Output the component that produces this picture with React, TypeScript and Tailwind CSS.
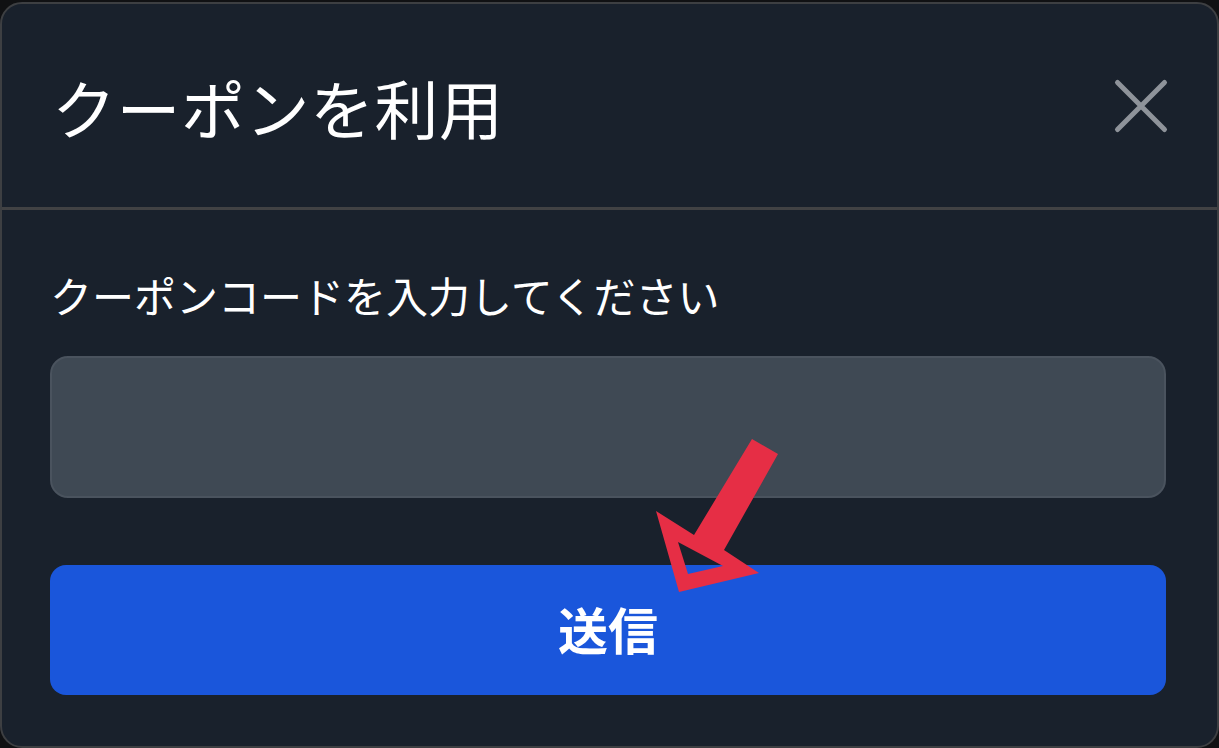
const font = { fontFamily: '"Noto Sans CJK JP", "Noto Sans", sans-serif' };

function CloseIcon() {
  return (
    <svg width="60" height="60" viewBox="0 0 60 60" fill="none" stroke="currentColor" strokeWidth="5" strokeLinecap="round">
      <path d="M6.5 6.5 L53.5 53.5 M53.5 6.5 L6.5 53.5" />
    </svg>
  );
}

function CouponArrow() {
  // red annotation arrow pointing down-left at the submit button
  return (
    <svg
      className="pointer-events-none absolute left-0 top-0"
      width="1219"
      height="748"
      viewBox="0 0 1219 748"
    >
      <path
        fillRule="evenodd"
        fill="#e62e45"
        d="M752 439 L778 454 L724 550 L759 573 L679 592 L656 511 L694 535 Z M678 542 L688 574 L723 566 Z"
      />
    </svg>
  );
}

export default function App() {
  return (
    <div className="relative h-[748px] w-[1219px] overflow-hidden bg-[#101113]" style={font}>
      <div className="mt-[2px] flex h-[746px] flex-col rounded-[22px] border-2 border-[#3d3f42] bg-[#19212c]">
        {/* header */}
        <div className="flex h-[203px] items-center justify-between pl-[50px] pr-[46px]">
          <h2 className="text-[64px] leading-none font-normal tracking-[0.5px] text-white">クーポンを利用</h2>
          <button className="flex size-[60px] items-center justify-center text-[#8e939a]">
            <CloseIcon />
          </button>
        </div>
        <div className="h-[3px] bg-[#414244]" />

        {/* body */}
        <div className="flex flex-col pl-[48px] pr-[51px] pt-[57px]">
          <label className="mb-[33px] text-[42px] leading-[56px] text-white">
            クーポンコードを入力してください
          </label>
          <input
            type="text"
            className="h-[142px] w-full rounded-[18px] border-2 border-[#4a535e] bg-[#3f4954] px-6 text-[40px] text-white outline-none"
          />
          <button className="mt-[67px] h-[130px] w-full rounded-[16px] bg-[#1a56db] pb-[4px] text-[50px] font-bold text-white">
            送信
          </button>
        </div>
      </div>
      <CouponArrow />
    </div>
  );
}
